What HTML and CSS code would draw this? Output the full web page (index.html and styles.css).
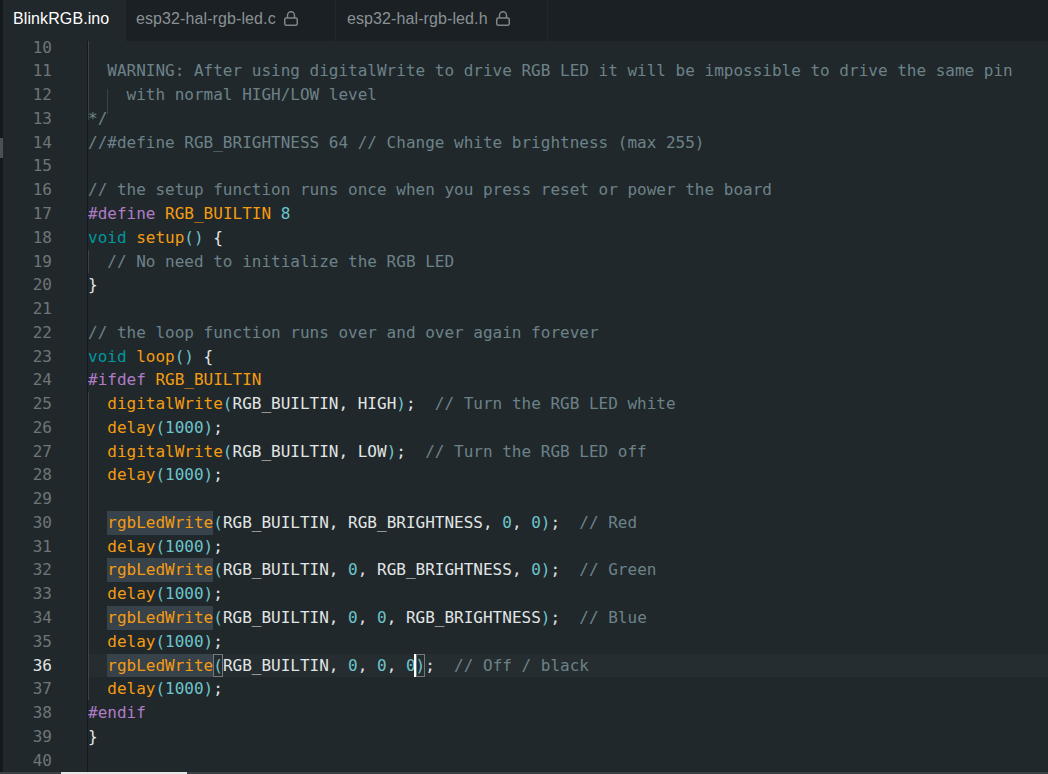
FILE: index.html
```html
<!DOCTYPE html>
<html lang="en">
<head>
  <meta charset="UTF-8">
  <title>BlinkRGB.ino</title>
  <link rel="stylesheet" href="styles.css">
</head>
<body>
  <div class="ide">
    <div class="tabs">
      <div class="tab active">BlinkRGB.ino</div>
      <div class="tab">esp32-hal-rgb-led.c
        <svg class="lock" width="14" height="15" viewBox="0 0 14 15"><rect x="0.75" y="7" width="12.5" height="7.25" rx="1.5" fill="none" stroke="#7f8588" stroke-width="1.5"/><path d="M3.5 7V4.2a3.5 3.5 0 0 1 7 0V7" fill="none" stroke="#7f8588" stroke-width="1.5"/></svg>
      </div>
      <div class="tab wide">esp32-hal-rgb-led.h
        <svg class="lock" width="14" height="15" viewBox="0 0 14 15"><rect x="0.75" y="7" width="12.5" height="7.25" rx="1.5" fill="none" stroke="#7f8588" stroke-width="1.5"/><path d="M3.5 7V4.2a3.5 3.5 0 0 1 7 0V7" fill="none" stroke="#7f8588" stroke-width="1.5"/></svg>
      </div>
    </div>
    <div class="editor">
      <div class="rail"><span class="rail-mark"></span></div>
      <pre class="nums"><span>10</span><span>11</span><span>12</span><span>13</span><span>14</span><span>15</span><span>16</span><span>17</span><span>18</span><span>19</span><span>20</span><span>21</span><span>22</span><span>23</span><span>24</span><span>25</span><span>26</span><span>27</span><span>28</span><span>29</span><span>30</span><span>31</span><span>32</span><span>33</span><span>34</span><span>35</span><span class="cur">36</span><span>37</span><span>38</span><span>39</span><span>40</span></pre>
      <pre class="code"><span class="ln"> </span>
<span class="ln c">  WARNING: After using digitalWrite to drive RGB LED it will be impossible to drive the same pin</span>
<span class="ln c">    with normal HIGH/LOW level</span>
<span class="ln c">*/</span>
<span class="ln c">//#define RGB_BRIGHTNESS 64 // Change white brightness (max 255)</span>
<span class="ln"> </span>
<span class="ln c">// the setup function runs once when you press reset or power the board</span>
<span class="ln"><b class="p">#define</b> <b class="o">RGB_BUILTIN</b> <b class="n">8</b></span>
<span class="ln"><b class="t">void</b> <b class="o">setup</b><b class="n">()</b> {</span>
<span class="ln c">  // No need to initialize the RGB LED</span>
<span class="ln">}</span>
<span class="ln"> </span>
<span class="ln c">// the loop function runs over and over again forever</span>
<span class="ln"><b class="t">void</b> <b class="o">loop</b><b class="n">()</b> {</span>
<span class="ln"><b class="p">#ifdef</b> <b class="o">RGB_BUILTIN</b></span>
<span class="ln">  <b class="o">digitalWrite</b><b class="n">(</b>RGB_BUILTIN, HIGH<b class="n">)</b>;  <b class="c">// Turn the RGB LED white</b></span>
<span class="ln">  <b class="o">delay</b><b class="n">(1000)</b>;</span>
<span class="ln">  <b class="o">digitalWrite</b><b class="n">(</b>RGB_BUILTIN, LOW<b class="n">)</b>;  <b class="c">// Turn the RGB LED off</b></span>
<span class="ln">  <b class="o">delay</b><b class="n">(1000)</b>;</span>
<span class="ln"> </span>
<span class="ln">  <b class="o hl">rgbLedWrite</b><b class="n">(</b>RGB_BUILTIN, RGB_BRIGHTNESS, <b class="n">0</b>, <b class="n">0</b><b class="n">)</b>;  <b class="c">// Red</b></span>
<span class="ln">  <b class="o">delay</b><b class="n">(1000)</b>;</span>
<span class="ln">  <b class="o hl">rgbLedWrite</b><b class="n">(</b>RGB_BUILTIN, <b class="n">0</b>, RGB_BRIGHTNESS, <b class="n">0</b><b class="n">)</b>;  <b class="c">// Green</b></span>
<span class="ln">  <b class="o">delay</b><b class="n">(1000)</b>;</span>
<span class="ln">  <b class="o hl">rgbLedWrite</b><b class="n">(</b>RGB_BUILTIN, <b class="n">0</b>, <b class="n">0</b>, RGB_BRIGHTNESS<b class="n">)</b>;  <b class="c">// Blue</b></span>
<span class="ln">  <b class="o">delay</b><b class="n">(1000)</b>;</span>
<span class="ln active-line">  <b class="o hl">rgbLedWrite</b><b class="n box">(</b>RGB_BUILTIN, <b class="n">0</b>, <b class="n">0</b>, <b class="n">0</b><b class="n box caret">)</b>;  <b class="c">// Off / black</b></span>
<span class="ln">  <b class="o">delay</b><b class="n">(1000)</b>;</span>
<span class="ln"><b class="p">#endif</b></span>
<span class="ln">}</span>
<span class="ln"> </span></pre>
      <div class="guide g1"></div>
      <div class="guide g2"></div>
      <div class="guide g3"></div>
      <div class="guide g4"></div>
    </div>
    <div class="hscroll"><span class="hthumb"></span></div>
  </div>
</body>
</html>
```

FILE: styles.css
```css
html, body {
  margin: 0;
  height: 100%;
  overflow: hidden;
  background-color: #21282b;
}
.ide {
  width: 1048px;
  height: 774px;
  display: flex;
  flex-direction: column;
}
.tabs {
  position: relative;
  z-index: 1;
  height: 41px;
  flex: none;
  display: flex;
  background-color: #1a2023;
  border-left: 3px solid #14191b;
  font-family: "Liberation Sans", Arial, sans-serif;
  font-size: 16px;
  letter-spacing: 0.1px;
}
.tab {
  display: flex;
  align-items: center;
  gap: 8px;
  padding: 0 0 3px 10px;
  width: 210px;
  box-sizing: border-box;
  color: #8a9194;
  border-right: 1px solid #21282b;
}
.tab.wide {
  width: 212px;
  padding-left: 11px;
}
.tab.active {
  width: 123px;
  color: #fff;
  background-color: #21282b;
  border-right: none;
}
.lock {
  flex: none;
  margin-top: -2px;
}
.editor {
  position: relative;
  flex: 1;
  display: flex;
  min-height: 0;
  font-family: "DejaVu Sans Mono", "Liberation Mono", monospace;
  font-size: 16px;
  line-height: 23.77px;
  color: #e0e5e6;
}
.rail {
  width: 3px;
  flex: none;
  background-color: #14191b;
  position: relative;
}
.rail-mark {
  position: absolute;
  left: 0;
  top: 97px;
  width: 3px;
  height: 20px;
  background-color: #4a5053;
}
pre {
  margin: 0;
  font: inherit;
}
.nums {
  width: 49px;
  flex: none;
  text-align: right;
  color: #6f7578;
  margin-top: -5.4px;
}
.nums span {
  display: block;
}
.nums .cur {
  color: #dfe3e4;
}
.code {
  flex: 1;
  margin: -5.4px 0 0 35px;
  border-left: 1px solid #14191b;
}
.ln {
  display: inline-block;
  width: 100%;
}
b {
  font-weight: normal;
}
.c { color: #6c8289; }
.p { color: #b07cc6; }
.t { color: #00979d; }
.o { color: #f39c12; }
.n { color: #6cc4cc; }
.hl {
  background-color: #37424a;
  display: inline-block;
}
.active-line {
  background-color: #262d30;
}
.box {
  box-shadow: inset 0 0 0 1px #75797a;
  display: inline-block;
}
.caret {
  border-left: 2px solid #fff;
  margin-left: -2px;
}
.guide {
  position: absolute;
  left: 88px;
  width: 1px;
  background-color: #3d4447;
}
.g1 { top: 0; height: 79px; }
.g2 { left: 107px; top: 48px; height: 25px; }
.g3 { top: 209px; height: 23px; }
.g4 { top: 351px; height: 308px; }
.hscroll {
  height: 2px;
  flex: none;
  background-color: #3a4144;
  position: relative;
}
.hthumb {
  position: absolute;
  left: 61px;
  top: 0;
  width: 126px;
  height: 2px;
  background-color: #e4e6e6;
}
```
